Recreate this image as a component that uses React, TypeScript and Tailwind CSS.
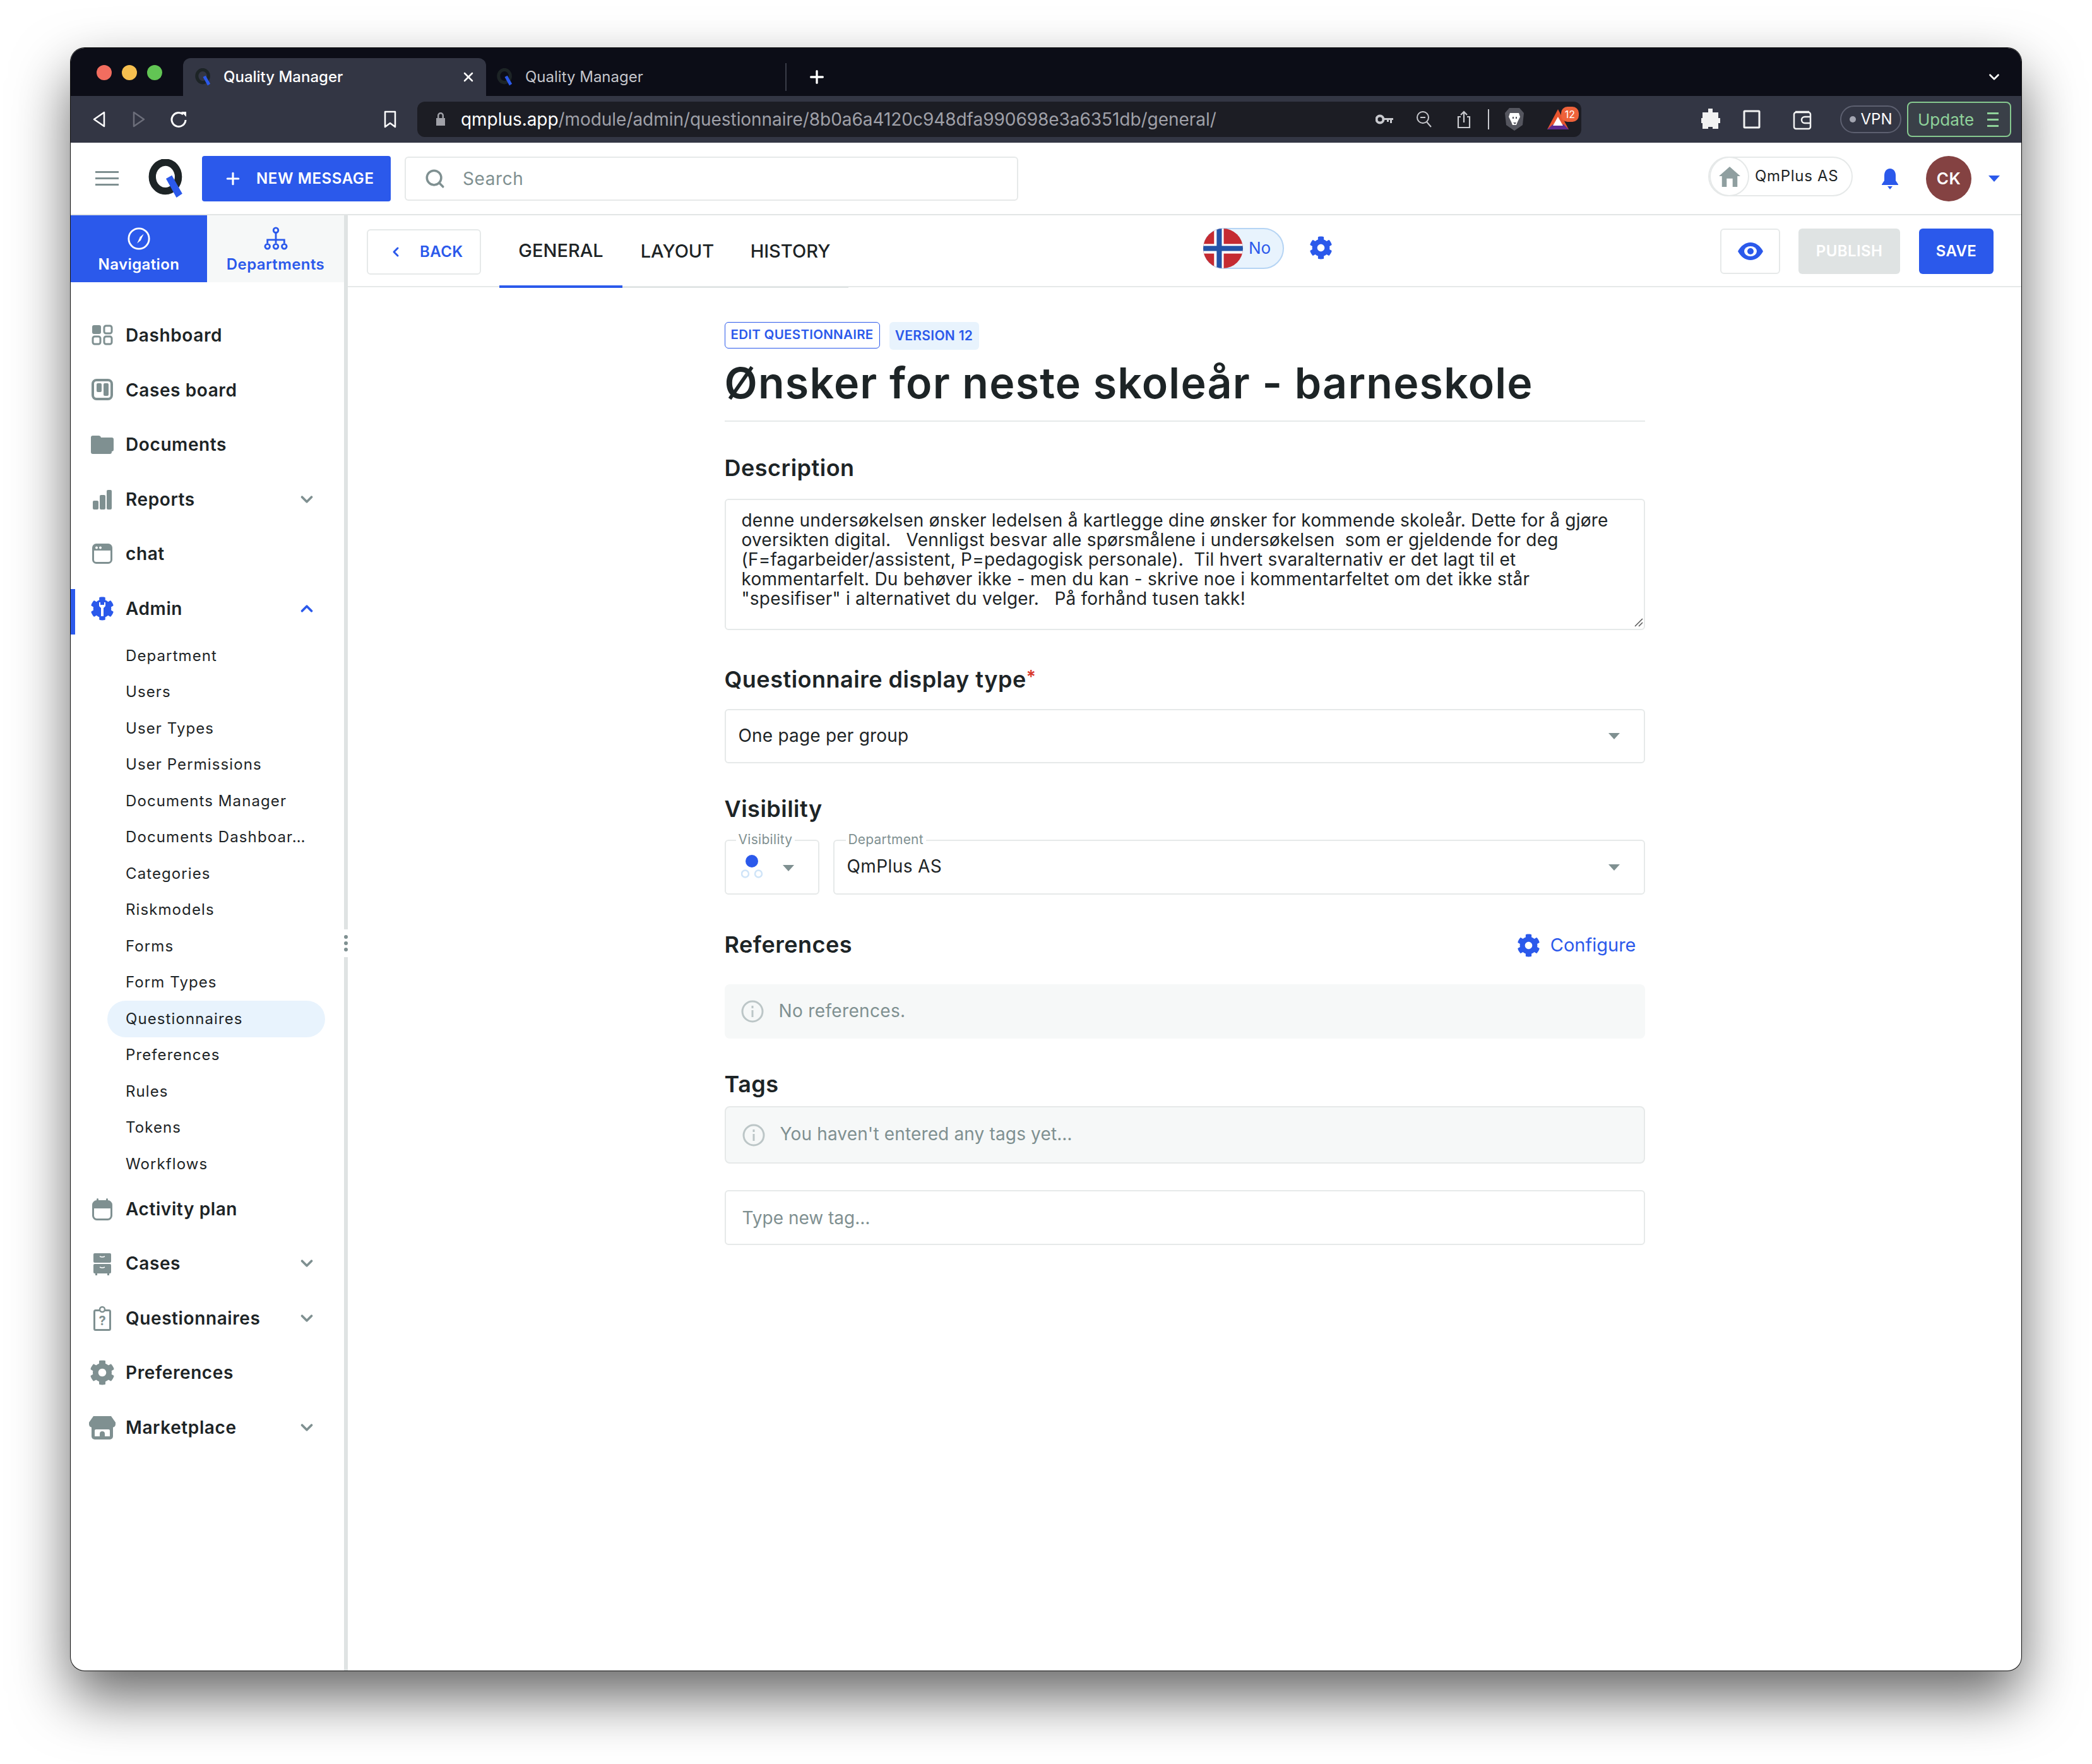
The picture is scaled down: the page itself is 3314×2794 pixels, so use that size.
import { ChevronDown, ChevronUp, ChevronLeft, Plus, Search, X } from "lucide-react";
import { FaCog } from "react-icons/fa";
import type { ReactNode } from "react";

const Q = ({ className }: { className: string }) => (
  <svg viewBox="0 0 56 60" className={className}>
    <ellipse cx="26" cy="27" rx="20" ry="22" fill="none" stroke="#1d2426" strokeWidth="11" />
    <path d="M27 30l9-5 16 28-9 6z" fill="#2b59eb" />
  </svg>
);

const I = ({ children, className = "w-[44px] h-[44px]" }: { children: ReactNode; className?: string }) => (
  <svg viewBox="0 0 44 44" className={className + " shrink-0"} fill="#7f9091">
    {children}
  </svg>
);

const DashboardIcon = () => (
  <I>
    <rect x="6" y="6" width="14" height="14" rx="3" />
    <rect x="25" y="7" width="12" height="12" rx="3" fill="none" stroke="#7f9091" strokeWidth="3" />
    <rect x="7" y="24" width="12" height="12" rx="3" fill="none" stroke="#7f9091" strokeWidth="3" />
    <rect x="25" y="24" width="12" height="12" rx="3" fill="none" stroke="#7f9091" strokeWidth="3" />
  </I>
);
const BoardIcon = () => (
  <I>
    <rect x="7" y="6" width="30" height="30" rx="6" fill="none" stroke="#7f9091" strokeWidth="4" />
    <rect x="13" y="11" width="8" height="14" rx="2" />
    <rect x="24" y="11" width="8" height="20" rx="2" />
  </I>
);
const FolderIcon = () => (
  <I>
    <path d="M4 11a3 3 0 0 1 3-3h9a4 4 0 0 1 4 3h17a3 3 0 0 1 3 3v16a3 3 0 0 1-3 3v1a3 3 0 0 1-3 3H7a3 3 0 0 1-3-3z" />
  </I>
);
const ReportsIcon = () => (
  <I>
    <rect x="7" y="24" width="9" height="14" rx="2" />
    <rect x="18" y="15" width="9" height="23" rx="2" />
    <rect x="29" y="7" width="8" height="31" rx="2" />
  </I>
);
const ChatIcon = () => (
  <I>
    <rect x="7.5" y="7.5" width="29" height="29" rx="5" fill="none" stroke="#7f9091" strokeWidth="3" />
    <path d="M8 12a4 4 0 0 1 4-4h20a4 4 0 0 1 4 4v5H8z" />
    <circle cx="13" cy="12.5" r="2" fill="#fff" />
    <circle cx="19" cy="12.5" r="2" fill="#fff" />
  </I>
);
const FaCogPath = () => (
  <g transform="translate(3 3) scale(0.0742)" fill="#2b59eb">
    <path d="M487.4 315.7l-42.6-24.6c4.3-23.2 4.3-47 0-70.2l42.6-24.6c4.9-2.8 7.1-8.6 5.5-14-11.1-35.6-30-67.8-54.7-94.6-3.8-4.1-10-5.1-14.8-2.3L380.8 110c-17.9-15.4-38.5-27.3-60.8-35.1V25.8c0-5.6-3.9-10.5-9.4-11.7-36.7-8.2-74.3-7.8-109.2 0-5.5 1.2-9.4 6.1-9.4 11.7V75c-22.2 7.9-42.8 19.8-60.8 35.1L88.7 85.5c-4.9-2.8-11-1.9-14.8 2.3-24.7 26.7-43.6 58.9-54.7 94.6-1.7 5.4.6 11.2 5.5 14L67.3 221c-4.3 23.2-4.3 47 0 70.2l-42.6 24.6c-4.9 2.8-7.1 8.6-5.5 14 11.1 35.6 30 67.8 54.7 94.6 3.8 4.1 10 5.1 14.8 2.3l42.6-24.6c17.9 15.4 38.5 27.3 60.8 35.1v49.2c0 5.6 3.9 10.5 9.4 11.7 36.7 8.2 74.3 7.8 109.2 0 5.5-1.2 9.4-6.1 9.4-11.7v-49.2c22.2-7.9 42.8-19.8 60.8-35.1l42.6 24.6c4.9 2.8 11 1.9 14.8-2.3 24.7-26.7 43.6-58.9 54.7-94.6 1.5-5.5-.7-11.3-5.6-14.1z" />
  </g>
);
const AdminIcon = () => (
  <svg viewBox="0 0 44 44" className="w-[44px] h-[44px] shrink-0">
    <FaCogPath />
    <path d="M17 12v6l3 3v13h4V21l3-3v-6l-2 0v4h-6v-4z" fill="#fff" />
  </svg>
);
const CalendarIcon = () => (
  <I>
    <rect x="7.5" y="9.5" width="29" height="29" rx="6" fill="none" stroke="#7f9091" strokeWidth="3" />
    <path d="M8 15a5 5 0 0 1 5-5h18a5 5 0 0 1 5 5v6H8z" />
    <rect x="13" y="5" width="3" height="7" rx="1.5" />
    <rect x="28" y="5" width="3" height="7" rx="1.5" />
  </I>
);
const CabinetIcon = () => (
  <I>
    <rect x="8" y="6" width="28" height="15" rx="2" />
    <rect x="8" y="23" width="28" height="15" rx="2" />
    <rect x="11" y="38" width="3" height="3" />
    <rect x="30" y="38" width="3" height="3" />
    <path d="M18 11q4 2 8 0M18 28q4 2 8 0" stroke="#fff" strokeWidth="1.5" fill="none" />
  </I>
);
const ClipboardIcon = () => (
  <I>
    <rect x="9.5" y="9.5" width="25" height="31" rx="2" fill="none" stroke="#7f9091" strokeWidth="3" />
    <circle cx="22" cy="8" r="4" fill="#fff" stroke="#7f9091" strokeWidth="2.5" />
    <text x="22" y="33" textAnchor="middle" fontSize="20" fontWeight="700" fill="#7f9091" fontFamily="Inter">
      ?
    </text>
  </I>
);
const StoreIcon = () => (
  <I>
    <path d="M8 4h28l7 10v3a5 5 0 0 1-5 5H6a5 5 0 0 1-5-5v-3z" />
    <path d="M5 20h34v16a5 5 0 0 1-5 5H10a5 5 0 0 1-5-5z" />
    <path d="M10 36V27a2 2 0 0 1 2-2h20a2 2 0 0 1 2 2v9h-8v-4a4 4 0 0 0-8 0v4z" fill="#fff" />
  </I>
);

const Gear = ({ className }: { className: string }) => <FaCog className={className} />;

const Caret = ({ className = "" }: { className?: string }) => (
  <span className={"w-0 h-0 border-x-[9px] border-x-transparent border-t-[10px] border-t-[#7f9091] " + className} />
);

type NavRow = { label: string; icon: ReactNode; chevron?: boolean };

const topRows: NavRow[] = [
  { label: "Dashboard", icon: <DashboardIcon /> },
  { label: "Cases board", icon: <BoardIcon /> },
  { label: "Documents", icon: <FolderIcon /> },
  { label: "Reports", icon: <ReportsIcon />, chevron: true },
  { label: "chat", icon: <ChatIcon /> },
];

const bottomRows: NavRow[] = [
  { label: "Activity plan", icon: <CalendarIcon /> },
  { label: "Cases", icon: <CabinetIcon />, chevron: true },
  { label: "Questionnaires", icon: <ClipboardIcon />, chevron: true },
  { label: "Preferences", icon: <Gear className="w-[40px] h-[40px] mx-[2px] shrink-0 text-[#7f9091]" /> },
  { label: "Marketplace", icon: <StoreIcon />, chevron: true },
];

const adminItems = [
  "Department",
  "Users",
  "User Types",
  "User Permissions",
  "Documents Manager",
  "Documents Dashboar…",
  "Categories",
  "Riskmodels",
  "Forms",
  "Form Types",
  "Questionnaires",
  "Preferences",
  "Rules",
  "Tokens",
  "Workflows",
];

const Row = ({ row }: { row: NavRow }) => (
  <div className="h-[86.5px] flex items-center pl-[28px] pr-[44px]">
    {row.icon}
    <span className="ml-[15px] text-[28px] font-semibold tracking-[0.6px] text-[#1d2426]">{row.label}</span>
    {row.chevron && <ChevronDown className="ml-auto w-[30px] h-[30px] text-[#7f9091]" strokeWidth={3} />}
  </div>
);

const Sidebar = () => (
  <aside className="w-[433px] shrink-0 flex flex-col">
    <div className="flex h-[106px]">
      <div className="w-[216px] bg-[#2b59eb] text-white flex flex-col items-center pt-[18px]">
        <svg viewBox="0 0 40 40" className="w-[38px] h-[38px]">
          <circle cx="20" cy="20" r="17" fill="none" stroke="#fff" strokeWidth="3" />
          <path d="M28 12l-5 11-6 5 5-11z" fill="#fff" />
        </svg>
        <span className="mt-[4px] text-[24px] font-semibold tracking-[0.4px]">Navigation</span>
      </div>
      <div className="w-[217px] bg-[#f6f8f8] text-[#2b59eb] flex flex-col items-center pt-[18px]">
        <svg viewBox="0 0 40 40" className="w-[38px] h-[38px]" fill="none" stroke="#2b59eb" strokeWidth="3">
          <circle cx="20" cy="6" r="4" />
          <path d="M20 10v12M6 28v-6h28v6M20 22v6" />
          <circle cx="6" cy="33" r="4" />
          <circle cx="20" cy="33" r="4" />
          <circle cx="34" cy="33" r="4" />
        </svg>
        <span className="mt-[4px] text-[24px] font-semibold tracking-[0.4px]">Departments</span>
      </div>
    </div>
    <nav className="pt-[41px]">
      {topRows.map((r) => (
        <Row key={r.label} row={r} />
      ))}
      <div className="relative h-[86.5px] flex items-center pl-[28px] pr-[44px]">
        <span className="absolute left-0 top-[12px] w-[7px] h-[72px] bg-[#2b59eb]" />
        <AdminIcon />
        <span className="ml-[15px] text-[28px] font-semibold tracking-[0.6px] text-[#1d2426]">Admin</span>
        <ChevronUp className="ml-auto w-[30px] h-[30px] text-[#2b59eb]" strokeWidth={3} />
      </div>
      <ul className="pt-[3px] -mb-[1px] pl-[58px] pr-[30px]">
        {adminItems.map((item) => (
          <li
            key={item}
            className={
              item === "Questionnaires"
                ? "h-[57.5px] flex items-center pl-[29px] rounded-full bg-[#e8f3fd] text-[24px] tracking-[1.1px] text-[#1d2426]"
                : "h-[57.5px] flex items-center pl-[29px] text-[24px] tracking-[1.1px] text-[#1d2426] whitespace-nowrap"
            }
          >
            {item}
          </li>
        ))}
      </ul>
      {bottomRows.map((r) => (
        <Row key={r.label} row={r} />
      ))}
    </nav>
  </aside>
);

const BrowserChrome = () => (
  <>
    <div className="h-[76px] shrink-0 bg-[#0c0d17] flex items-end rounded-t-[22px] relative">
      <div className="w-[178px] h-[76px] flex items-center gap-[16px] pl-[41px] pt-[2px] self-start shrink-0">
        <span className="w-[24px] h-[24px] rounded-full bg-[#f26d5f]" />
        <span className="w-[24px] h-[24px] rounded-full bg-[#f6bf4f]" />
        <span className="w-[24px] h-[24px] rounded-full bg-[#62c554]" />
      </div>
      <div className="w-[480px] h-[60px] bg-[#333644] rounded-t-[12px] flex items-center pl-[19px] pr-[16px] text-white shrink-0">
        <Q className="w-[26px] h-[28px]" />
        <span className="ml-[19px] text-[24px] font-medium">Quality Manager</span>
        <X className="ml-auto w-[24px] h-[24px]" strokeWidth={2.5} />
      </div>
      <div className="w-[476px] h-[60px] flex items-center pl-[17px] text-[#c4c5cb] shrink-0">
        <Q className="w-[26px] h-[28px]" />
        <span className="ml-[19px] text-[24px]">Quality Manager</span>
        <span className="ml-auto w-[2px] h-[44px] bg-[#3a3c48]" />
      </div>
      <div className="h-[60px] flex items-center ml-[32px]">
        <Plus className="w-[32px] h-[32px] text-white" strokeWidth={2.5} />
      </div>
      <div className="ml-auto h-[60px] flex items-center pr-[30px]">
        <ChevronDown className="w-[26px] h-[26px] text-white" strokeWidth={2.5} />
      </div>
    </div>
    <div className="h-[74px] bg-[#333644] flex items-center shrink-0">
      <svg viewBox="0 0 24 28" className="ml-[33px] w-[24px] h-[28px]" fill="none" stroke="#fff" strokeWidth="2.5" strokeLinejoin="round">
        <path d="M20 3L4 14l16 11z" />
      </svg>
      <svg viewBox="0 0 24 28" className="ml-[39px] w-[24px] h-[28px]" fill="none" stroke="#6c6e7a" strokeWidth="2.5" strokeLinejoin="round">
        <path d="M4 3l16 11L4 25z" />
      </svg>
      <svg viewBox="0 0 28 28" className="ml-[37px] w-[28px] h-[28px]" fill="none" stroke="#fff" strokeWidth="3">
        <path d="M21 6a11 11 0 1 0 4 9" />
        <path d="M18 2h8v8z" fill="#fff" stroke="none" />
      </svg>
      <svg viewBox="0 0 22 28" className="ml-[310px] w-[22px] h-[28px]" fill="none" stroke="#fff" strokeWidth="2.5" strokeLinejoin="round">
        <path d="M3 2h16v24l-8-6-8 6z" />
      </svg>
      <div className="ml-[32px] w-[1844px] h-[56px] rounded-[12px] bg-[#1c1d24] flex items-center relative">
        <svg viewBox="0 0 16 24" className="ml-[29px] w-[16px] h-[24px]" fill="#a0a1a8">
          <path d="M3 10V6a5 5 0 0 1 10 0v4h2v12H1V10zm2.500 0h5V6a2.500 2.500 0 0 0-5 0z" />
        </svg>
        <span className="ml-[24px] text-[28px] tracking-[-0.05px] text-white whitespace-nowrap">
          qmplus.app<span className="text-[#9fa0a8]">/module/admin/questionnaire/8b0a6a4120c948dfa990698e3a6351db/general/</span>
        </span>
        <svg viewBox="0 0 28 16" className="ml-auto w-[28px] h-[16px]" fill="#c8c9ce">
          <circle cx="7" cy="8" r="5.500" fill="none" stroke="#c8c9ce" strokeWidth="4" />
          <path d="M12 6h16v3h-2v5h-3V9h-2v3h-3V9h-6z" />
        </svg>
        <svg viewBox="0 0 26 28" className="ml-[36px] w-[26px] h-[28px]" fill="none" stroke="#c8c9ce" strokeWidth="2">
          <circle cx="11" cy="11" r="9" />
          <path d="M17 18l7 8M7 11h8" />
        </svg>
        <svg viewBox="0 0 24 30" className="ml-[38px] w-[24px] h-[30px]" fill="none" stroke="#c8c9ce" strokeWidth="2.2">
          <path d="M7 11H3v17h18V11h-4M12 20V3M7 8l5-5 5 5" />
        </svg>
        <span className="ml-[26px] w-[2px] h-[32px] bg-[#c8c9ce]" />
        <svg viewBox="0 0 32 38" className="ml-[24px] w-[32px] h-[38px]">
          <path d="M8 1h16l7 8-2 19-13 9-13-9L1 9z" fill="#55565f" />
          <path d="M9 9h14l2 6-4 8-2 5h-6l-2-5-4-8z" fill="#fff" />
          <path d="M13 15h2v3h-2zM18 15h2v3h-2zM14 24h5l-2 3z" fill="#55565f" />
        </svg>
        <svg viewBox="0 0 38 34" className="ml-[34px] w-[38px] h-[34px]">
          <path d="M19 1L2 33h34z" fill="#e8552f" />
          <path d="M2 33l9-8h17l8 8z" fill="#5f2c90" />
          <path d="M19 13l8 14H11z" fill="#fff" />
        </svg>
        <span className="absolute right-[4px] top-[8px] w-[28px] h-[24px] rounded-[10px] bg-[#ee623a] text-white text-[16px] flex items-center justify-center">
          12
        </span>
        <span className="w-[18px]" />
      </div>
      <svg viewBox="0 0 30 34" className="ml-[190px] w-[30px] h-[34px]" fill="#f2f2f2">
        <path d="M11 0h7v6h9v9h3v8h-3v9h-9v-3h-7v3H2v-9H0v-8h2V6h9z" />
      </svg>
      <svg viewBox="0 0 28 30" className="ml-[36px] w-[28px] h-[30px]" fill="none" stroke="#f2f2f2" strokeWidth="3">
        <rect x="2" y="2" width="24" height="26" rx="1" />
      </svg>
      <svg viewBox="0 0 32 34" className="ml-[50px] w-[32px] h-[34px]" fill="none" stroke="#f2f2f2" strokeWidth="2.500">
        <path d="M5 5h22M3 9a3 3 0 0 1 3-3h20a3 3 0 0 1 3 3v20a3 3 0 0 1-3 3H6a3 3 0 0 1-3-3z" />
        <path d="M29 13H20a5 5 0 0 0 0 10h9" />
      </svg>
      <div className="ml-[44px] w-[97px] h-[44px] rounded-full border-2 border-[#5d6070] flex items-center justify-center gap-[8px] text-white text-[24px]">
        <span className="w-[10px] h-[10px] rounded-full bg-[#a3a5b1]" />
        VPN
      </div>
      <div className="ml-[9px] w-[165px] h-[56px] rounded-[8px] border-2 border-[#86c88f] bg-[#3a4048] flex items-center pl-[15px] text-[#8fd29a] text-[26px]">
        Update
        <span className="ml-auto mr-[18px] w-[18px] flex flex-col gap-[7px]">
          <i className="block h-[3px] bg-[#8fd29a]" />
          <i className="block h-[3px] bg-[#8fd29a]" />
          <i className="block h-[3px] bg-[#8fd29a]" />
        </span>
      </div>
    </div>
  </>
);

const AppHeader = () => (
  <header className="h-[115px] shrink-0 border-b-2 border-[#e2e5e5] flex items-center pl-[39px] pr-[34px]">
    <div className="w-[37px] flex flex-col gap-[7px]">
      <i className="block h-[3px] bg-[#7f9091]" />
      <i className="block h-[3px] bg-[#7f9091]" />
      <i className="block h-[3px] bg-[#7f9091]" />
    </div>
    <Q className="ml-[47px] w-[58px] h-[62px]" />
    <button className="ml-[27px] w-[299px] h-[72px] rounded-[4px] bg-[#2b59eb] text-white flex items-center pl-[34px] gap-[22px] text-[24px] font-semibold tracking-[0.6px]">
      <Plus className="w-[30px] h-[30px]" strokeWidth={2.5} />
      NEW MESSAGE
    </button>
    <div className="ml-[22px] w-[972px] h-[70px] rounded-[6px] border-2 border-[#e6e9e9] flex items-center pl-[29px]">
      <Search className="w-[34px] h-[34px] text-[#7f9091]" strokeWidth={2.5} />
      <span className="ml-[27px] text-[28px] tracking-[0.6px] text-[#7f9091]">Search</span>
    </div>
    <div className="ml-auto relative w-[229px] h-[63px] rounded-full border-2 border-[#e6e9e9] flex items-center pl-[72px] pb-[2px] text-[24px] text-[#1d2426] tracking-[0.7px] -mt-[6px]">
      <span className="absolute left-0 top-[-2px] w-[63px] h-[63px] rounded-full border-2 border-[#e6e9e9] bg-white flex items-center justify-center">
        <svg viewBox="0 0 36 34" className="w-[36px] h-[32px]" fill="#8f9fa0">
          <path d="M18 0l18 16h-5v18h-8V20H13v14H5V16H0z" />
        </svg>
      </span>
      QmPlus AS
    </div>
    <svg viewBox="0 0 30 34" className="ml-[44px] w-[30px] h-[34px]" fill="#2b59eb">
      <path d="M15 1c6 0 9 5 9 11v8l4 6v1H2v-1l4-6v-8C6 6 9 1 15 1z" />
      <path d="M11 29h8l-4 5z" />
    </svg>
    <div className="ml-[42px] w-[72px] h-[72px] rounded-full bg-[#844242] text-white flex items-center justify-center text-[26px] font-semibold tracking-[0.5px]">
      CK
    </div>
    <Caret className="ml-[27px] border-t-[#2b59eb]!" />
  </header>
);

const SubBar = () => (
  <div className="h-[114px] shrink-0 border-b-2 border-[#e6e9e9] flex items-start relative">
    <button className="ml-[30px] mt-[22px] w-[181px] h-[72px] rounded-[6px] border-2 border-[#e6e9e9] text-[#2b59eb] flex items-center pl-[38px] gap-[26px] text-[24px] font-semibold tracking-[0.4px]">
      <ChevronLeft className="w-[24px] h-[30px] -ml-[6px]" strokeWidth={3} />
      BACK
    </button>
    <div className="ml-[29px] flex h-[115px] text-[29px] font-[550] text-[#1d2426]">
      <span className="w-[195px] flex items-center justify-center border-b-4 border-[#2b59eb]">GENERAL</span>
      <span className="w-[174px] flex items-center justify-center border-b-2 border-[#dfe3e3]">LAYOUT</span>
      <span className="w-[184px] flex items-center justify-center border-b-2 border-[#dfe3e3]">HISTORY</span>
    </div>
    <div className="ml-[562px] mt-[20px] w-[128px] h-[65px] rounded-full border-2 border-[#b5d4f4] bg-[#e8f3fd] flex items-center relative text-[#2b59eb] text-[26px] pl-[70px] pb-[2px]">
      <svg viewBox="0 0 62 62" className="absolute left-[-2px] top-[-1px] w-[63px] h-[63px]">
        <clipPath id="flag-clip">
          <circle cx="31" cy="31" r="31" />
        </clipPath>
        <g clipPath="url(#flag-clip)">
          <rect width="62" height="62" fill="#c52b32" />
          <rect x="17" width="15" height="62" fill="#fff" />
          <rect y="24" width="62" height="15" fill="#fff" />
          <rect x="21" width="8" height="62" fill="#2353a8" />
          <rect y="27" width="62" height="8" fill="#2353a8" />
        </g>
      </svg>
      No
    </div>
    <Gear className="ml-[40px] mt-[33px] w-[37px] h-[37px] text-[#2b59eb]" />
    <button className="ml-auto mt-[21px] w-[95px] h-[72px] rounded-[6px] border-2 border-[#e6e9e9] flex items-center justify-center">
      <svg viewBox="0 0 40 28" className="w-[40px] h-[28px]">
        <path d="M0 14C5 5 12 0 20 0s15 5 20 14c-5 9-12 14-20 14S5 23 0 14z" fill="#2b59eb" />
        <ellipse cx="20" cy="14" rx="10" ry="8" fill="#fff" />
        <circle cx="20" cy="14" r="5" fill="#2b59eb" />
      </svg>
    </button>
    <button className="ml-[29px] mt-[21px] w-[161px] h-[72px] rounded-[6px] bg-[#dfe3e3] text-white text-[24px] font-semibold tracking-[0.4px]">
      PUBLISH
    </button>
    <button className="ml-[30px] mr-[44px] mt-[21px] w-[118px] h-[72px] rounded-[6px] bg-[#2b59eb] text-white text-[24px] font-semibold tracking-[0.4px]">
      SAVE
    </button>
  </div>
);

const Heading = ({ children, className }: { children: ReactNode; className: string }) => (
  <h2 className={"h-[48px] pb-[2px] flex items-center text-[36px] font-semibold text-[#1d2426] tracking-[0.5px] " + className}>{children}</h2>
);

const InfoNote = ({ children, className }: { children: ReactNode; className: string }) => (
  <div className={"rounded-[8px] bg-[#f6f8f8] flex items-center pl-[26px] pb-[3px] text-[#7f9091] text-[28px] " + className}>
    <svg viewBox="0 0 36 36" className="w-[36px] h-[36px] mr-[24px] mt-[3px]" fill="none" stroke="#bcc6c7" strokeWidth="3">
      <circle cx="18" cy="18" r="16" />
      <path d="M18 16v11M18 9v4" />
    </svg>
    {children}
  </div>
);

const Main = () => (
  <main className="flex-1 min-w-0 flex flex-col">
    <SubBar />
    <div className="mx-auto w-[1458px] pt-[55px] text-[#1d2426]">
      <div className="flex items-start gap-[15px]">
        <span className="h-[42px] w-[246px] rounded-[6px] border-[1.5px] border-[#2b59eb] text-[#2b59eb] text-[20.5px] font-semibold tracking-[0.3px] flex items-center justify-center pb-[2px]">
          EDIT QUESTIONNAIRE
        </span>
        <span className="h-[44px] w-[142px] rounded-[6px] bg-[#e8f3fd] text-[#2b59eb] text-[21px] font-semibold tracking-[0.3px] flex items-center justify-center">
          VERSION 12
        </span>
      </div>
      <h1 className="h-[114px] border-b-2 border-[#e6e9e9] pb-[8px] flex items-center text-[68px] font-semibold tracking-[1.25px] whitespace-nowrap">
        Ønsker for neste skoleår - barneskole
      </h1>
      <Heading className="mt-[50px] mb-[24px]">Description</Heading>
      <div className="relative h-[208px] rounded-[6px] border-2 border-[#e6e9e9] pl-[25px] pr-[20px] pt-[17px] text-[28px] leading-[31px] tracking-[0.22px]">
        <p className="whitespace-pre">
          {"denne undersøkelsen ønsker ledelsen å kartlegge dine ønsker for kommende skoleår. Dette for å gjøre\noversikten digital.   Vennligst besvar alle spørsmålene i undersøkelsen  som er gjeldende for deg\n(F=fagarbeider/assistent, P=pedagogisk personale).  Til hvert svaralternativ er det lagt til et\nkommentarfelt. Du behøver ikke - men du kan - skrive noe i kommentarfeltet om det ikke står\n\"spesifiser\" i alternativet du velger.   På forhånd tusen takk!"}
        </p>
        <svg viewBox="0 0 14 14" className="absolute right-[1px] bottom-[3px] w-[14px] h-[14px]" stroke="#555" strokeWidth="1.500">
          <path d="M1 13L13 1M7 13l6-6" />
        </svg>
      </div>
      <Heading className="mt-[55px] mb-[22px]">
        Questionnaire display type<span className="text-[#d9382e] self-start mt-[-2px] text-[28px]">*</span>
      </Heading>
      <div className="h-[86px] rounded-[6px] border-2 border-[#e6e9e9] flex items-center pl-[20px] pr-[38px] text-[28px] tracking-[0.2px] pb-[2px]">
        One page per group
        <Caret className="ml-auto mt-[2px]" />
      </div>
      <Heading className="mt-[49px] mb-[24px]">Visibility</Heading>
      <div className="flex gap-[22px]">
        <div className="relative w-[150px] h-[87px] rounded-[6px] border-2 border-[#e6e9e9] pl-[24px] pt-[22px] flex items-start">
          <span className="absolute left-[16px] top-[-16px] bg-white px-[4px] text-[21px] tracking-[0.3px] text-[#7f9091] leading-[28px]">Visibility</span>
          <svg viewBox="0 0 36 37" className="w-[36px] h-[37px]" fill="none" stroke="#cfe4f8" strokeWidth="2.500">
            <circle cx="17" cy="10" r="10" fill="#2b59eb" stroke="none" />
            <circle cx="6.500" cy="30" r="5.500" />
            <circle cx="27.500" cy="30" r="5.500" />
          </svg>
          <Caret className="ml-[30px] mt-[16px]" />
        </div>
        <div className="relative flex-1 h-[87px] rounded-[6px] border-2 border-[#e6e9e9] flex items-center pl-[20px] pr-[38px] pb-[3px] text-[28px] tracking-[0.4px]">
          <span className="absolute left-[18px] top-[-16px] bg-white px-[4px] text-[21px] tracking-[0.2px] text-[#7f9091] leading-[28px]">Department</span>
          QmPlus AS
          <Caret className="ml-auto mt-[3px]" />
        </div>
      </div>
      <div className="mt-[56px] mb-[38px] flex items-center h-[48px]">
        <Heading className="">References</Heading>
        <span className="ml-auto flex items-center gap-[16px] pr-[14px] text-[#2b59eb] text-[29px]">
          <Gear className="w-[37px] h-[37px]" />
          Configure
        </span>
      </div>
      <InfoNote className="h-[86px] tracking-[0.35px]">No references.</InfoNote>
      <Heading className="mt-[49px] mb-[10px]">Tags</Heading>
      <InfoNote className="h-[91px] border-2 border-[#e6e9e9] tracking-[0.15px]">You haven't entered any tags yet…</InfoNote>
      <div className="mt-[42px] h-[87px] rounded-[6px] border-2 border-[#e6e9e9] flex items-center pl-[26px] text-[28px] text-[#7f9091] tracking-[0px]">
        Type new tag…
      </div>
    </div>
  </main>
);

export default function App() {
  return (
    <div className="w-[3314px] h-[2794px] bg-white pt-[76px] pl-[112px] overflow-hidden [font-family:Inter,sans-serif]">
      <div className="w-[3090px] h-[2570px] bg-white rounded-[22px] flex flex-col shadow-[0_0_0_1px_#111,0_42px_90px_rgba(0,0,0,0.6)]">
        <BrowserChrome />
        <AppHeader />
        <div className="flex-1 flex min-h-0">
          <Sidebar />
          <div className="relative w-[6px] shrink-0 bg-[#dfe3e3]">
            <span className="absolute left-0 top-[1131px] w-[6px] h-[44px] bg-white flex flex-col items-center justify-center gap-[4px]">
              <i className="block w-[6px] h-[6px] rounded-full bg-[#7f9091]" />
              <i className="block w-[6px] h-[6px] rounded-full bg-[#7f9091]" />
              <i className="block w-[6px] h-[6px] rounded-full bg-[#7f9091]" />
            </span>
          </div>
          <Main />
        </div>
      </div>
    </div>
  );
}
